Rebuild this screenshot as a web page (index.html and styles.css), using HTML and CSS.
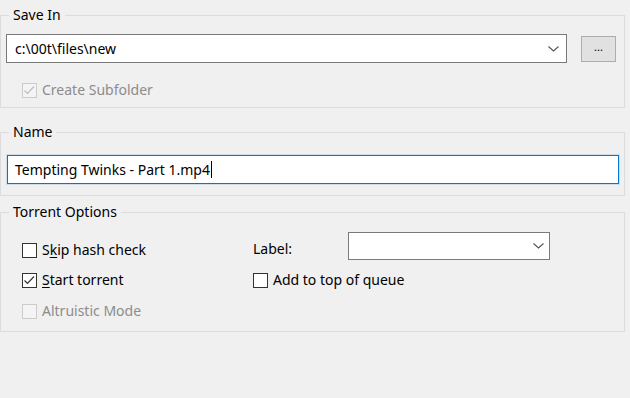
FILE: index.html
```html
<!DOCTYPE html>
<html>
<head>
  <meta charset="UTF-8">
  <title>Add Torrent</title>
  <link rel="stylesheet" href="styles.css">
</head>
<body>
  <div class="dialog">
    <fieldset class="group save-in">
      <legend>Save In</legend>
      <div class="path-row">
        <div class="combo path">
          <span class="value">c:\00t\files\new</span>
          <svg class="chevron" width="11" height="6" viewBox="0 0 11 6"><polyline points="0.5,0.5 5.5,5 10.5,0.5" /></svg>
        </div>
        <button class="browse">...</button>
      </div>
      <label class="check subfolder disabled">
        <span class="box"><svg width="13" height="13" viewBox="0 0 13 13"><polyline points="1.5,6.5 4.5,9.5 11,2.5" /></svg></span>
        Create Subfolder
      </label>
    </fieldset>

    <fieldset class="group name">
      <legend>Name</legend>
      <div class="textbox focused">Tempting Twinks - Part 1.mp4<span class="caret"></span></div>
    </fieldset>

    <fieldset class="group options">
      <legend>Torrent Options</legend>
      <div class="options-grid">
        <label class="check first-row">
          <span class="box"></span>
          <span>S<u>k</u>ip hash check</span>
        </label>
        <span class="field-label">Label:</span>
        <div class="combo label-combo">
          <span class="value"></span>
          <svg class="chevron" width="11" height="6" viewBox="0 0 11 6"><polyline points="0.5,0.5 5.5,5 10.5,0.5" /></svg>
        </div>

        <label class="check">
          <span class="box"><svg width="13" height="13" viewBox="0 0 13 13"><polyline points="1.5,6.5 4.5,9.5 11,2.5" /></svg></span>
          <span><u>S</u>tart torrent</span>
        </label>
        <label class="check queue">
          <span class="box"></span>
          <span>Add to top of queue</span>
        </label>

        <label class="check disabled altruistic">
          <span class="box"></span>
          <span>Altruistic Mode</span>
        </label>
      </div>
    </fieldset>
  </div>
</body>
</html>
```

FILE: styles.css
```css
body {
  margin: 0;
  background: #f0f0f0;
  font-family: 'Noto Sans', 'Open Sans', sans-serif;
  font-size: 14px;
  color: #000;
}
.dialog {
  width: 625px;
}
.group {
  margin: 0;
  padding: 0;
  min-width: 0;
  border: 1px solid #dcdcdc;
}
.group legend {
  margin-left: 8px;
  padding: 0 4px;
  line-height: 16px;
}
.save-in {
  margin-top: 7px;
  padding-bottom: 9px;
}
.name {
  margin-top: 16px;
  padding-bottom: 11px;
}
.options {
  margin-top: 8px;
  padding-bottom: 12px;
}

/* combo boxes and text boxes */
.path-row {
  display: flex;
  gap: 14px;
  margin: 11px 8px 0 5px;
}
.combo {
  display: flex;
  align-items: center;
  box-sizing: border-box;
  background: #fff;
  border: 1px solid #7a7a7a;
  padding: 0 7px 0 8px;
}
.combo .value {
  flex: 1;
}
.chevron polyline {
  fill: none;
  stroke: #555;
  stroke-width: 1.1;
}
.path {
  flex: 1;
  height: 29px;
}
.browse {
  width: 35px;
  height: 26px;
  margin-top: 2px;
  padding: 0 0 5px;
  background: #e1e1e1;
  border: 1px solid #adadad;
  font-family: inherit;
  font-size: 11px;
  line-height: 1;
  color: #000;
}
.textbox {
  box-sizing: border-box;
  height: 29px;
  margin: 15px 5px 0 6px;
  padding: 0 7px;
  display: flex;
  align-items: center;
  background: #fff;
  border: 1px solid #0078d7;
  box-shadow: 0 0 0 1px rgba(0, 120, 215, 0.15);
}
.caret {
  display: inline-block;
  width: 1px;
  height: 17px;
  background: #000;
  margin-left: 1px;
}

/* check boxes */
.check {
  display: flex;
  align-items: center;
  gap: 5px;
  height: 16px;
  line-height: 16px;
}
.check .box {
  box-sizing: border-box;
  width: 15px;
  height: 15px;
  background: #fff;
  border: 1px solid #333;
  display: flex;
  align-items: center;
  justify-content: center;
}
.check .box polyline {
  fill: none;
  stroke: #333;
  stroke-width: 1.2;
}
.check u {
  text-decoration-thickness: 1px;
  text-underline-offset: 2px;
}
.check.disabled {
  color: #8c8c8c;
}
.check.disabled .box {
  border-color: #cccccc;
  background: #f4f4f4;
}
.check.disabled .box polyline {
  stroke: #bdbdbd;
}
.subfolder {
  margin: 19px 0 0 21px;
}

/* torrent options grid */
.options-grid {
  display: grid;
  grid-template-columns: 231px 95px 202px;
  grid-template-rows: 28px 16px 19px;
  row-gap: 12px;
  align-items: center;
  margin: 12px 0 0 21px;
}
.options-grid .first-row {
  padding-top: 8px;
  height: 16px;
}
.field-label {
  padding-top: 6px;
  line-height: 16px;
}
.label-combo {
  height: 28px;
  padding-right: 5px;
}
.queue {
  grid-column: 2 / 4;
}
.altruistic {
  grid-column: 1;
  align-self: end;
}
```
